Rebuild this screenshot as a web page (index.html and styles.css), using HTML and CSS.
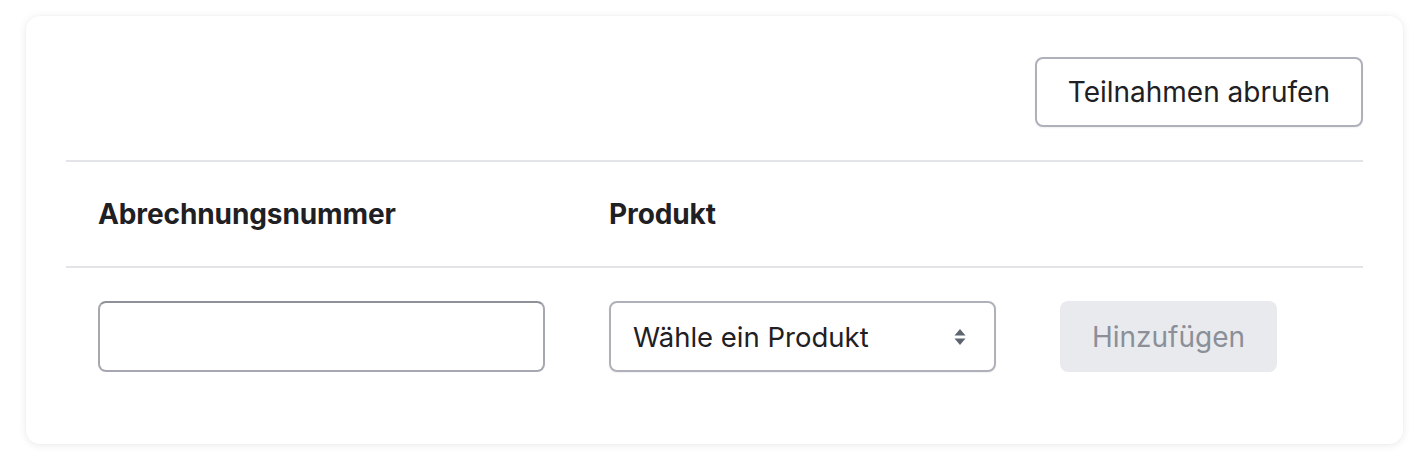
FILE: index.html
```html
<!DOCTYPE html>
<html lang="de">
<head>
<meta charset="utf-8">
<link rel="stylesheet" href="styles.css">
</head>
<body>
<div class="card">
  <div class="toolbar">
    <button class="btn-outline">Teilnahmen abrufen</button>
  </div>
  <table class="tbl">
    <thead>
      <tr>
        <th class="c1">Abrechnungsnummer</th>
        <th class="c2">Produkt</th>
        <th class="c3"></th>
      </tr>
    </thead>
    <tbody>
      <tr>
        <td class="c1"><input class="field" type="text"></td>
        <td class="c2">
          <div class="select">
            <span>Wähle ein Produkt</span>
            <svg class="chev" width="12" height="18" viewBox="0 0 12 18"><path d="M6 1 L11.5 7.5 H0.5 Z M6 17 L11.5 10.5 H0.5 Z" fill="#5f6570"/></svg>
          </div>
        </td>
        <td class="c3"><button class="btn-disabled">Hinzufügen</button></td>
      </tr>
    </tbody>
  </table>
</div>
</body>
</html>
```

FILE: styles.css
```css
html, body {
  margin: 0;
  padding: 0;
  background: #ffffff;
  font-family: Inter, "Noto Sans", sans-serif;
  color: #1f2023;
}
body {
  padding: 16px 23px 21px 26px;
}
.card {
  background: #ffffff;
  border-radius: 14px;
  box-shadow: 0 1px 8px rgba(0, 0, 0, 0.09), 0 0 2px rgba(0,0,0,0.03);
  padding: 41px 40px 40px 40px;
}
.toolbar {
  display: flex;
  justify-content: flex-end;
  padding-bottom: 33px;
  border-bottom: 2px solid #e3e4e7;
}
.btn-outline {
  font-family: inherit;
  font-size: 28px;
  color: #1f2023;
  background: #fff;
  border: 2px solid #aeb1ba;
  border-radius: 8px;
  height: 70px;
  padding: 0 31px;
  box-shadow: 0 1px 2px rgba(0,0,0,0.06);
}
.tbl {
  width: 100%;
  border-collapse: collapse;
}
.tbl th {
  text-align: left;
  font-family: Inter, "Noto Sans", sans-serif;
  font-weight: 700;
  font-size: 28px;
  letter-spacing: -0.1px;
  color: #1f2023;
  height: 104px;
  padding: 0 32px;
  border-bottom: 2px solid #e3e4e7;
}
.tbl td {
  padding: 33px 32px 32px 32px;
  vertical-align: top;
}
.c1 { width: 447px; }
.c2 { width: 386px; }
.field {
  box-sizing: border-box;
  width: 447px;
  height: 71px;
  border: 2px solid #a5a8b1;
  border-top-color: #8e9199;
  border-radius: 8px;
  display: block;
}
.select {
  box-sizing: border-box;
  width: 387px;
  height: 71px;
  border: 2px solid #aeb1ba;
  border-radius: 8px;
  display: flex;
  align-items: center;
  justify-content: space-between;
  padding: 0 28px 0 22px;
  font-size: 27.5px;
  color: #1f2023;
  box-shadow: 0 1px 2px rgba(0,0,0,0.06);
}
.chev { display: block; }
.btn-disabled {
  font-family: inherit;
  font-size: 28px;
  color: #8a8f98;
  background: #e9eaee;
  border: none;
  border-radius: 8px;
  height: 71px;
  width: 217px;
}
```
